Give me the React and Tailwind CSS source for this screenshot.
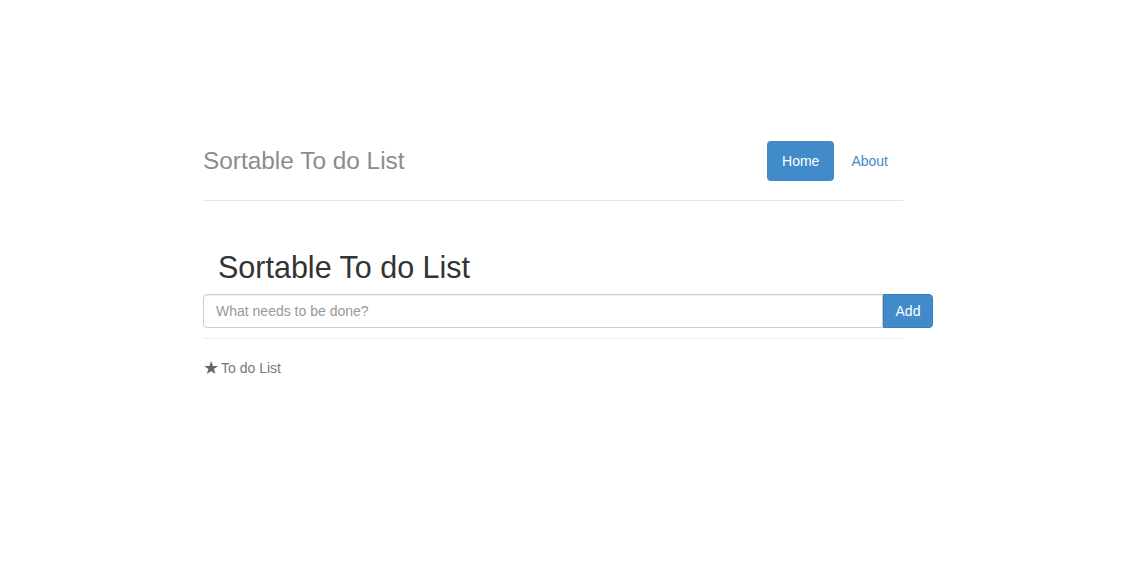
export default function App() {
  return (
    <div className="min-h-[570px] bg-white text-[14px] leading-[20px] text-[#333] font-['Liberation_Sans',Arial,sans-serif]">
      <div className="w-[700px] ml-[203px] pt-[141px]">
        {/* Header */}
        <div className="flex items-center justify-between pb-[19px] border-b border-[#e5e5e5]">
          <h3 className="text-[24.4px] leading-[40px] text-[#8c8c8c]">Sortable To do List</h3>
          <ul className="flex gap-[2px]">
            <li>
              <a className="block h-[40px] px-[15px] leading-[40px] rounded-[4px] bg-[#428bca] text-white">Home</a>
            </li>
            <li>
              <a className="block h-[40px] px-[15px] leading-[40px] rounded-[4px] text-[#428bca]">About</a>
            </li>
          </ul>
        </div>

        {/* Todo */}
        <div className="mt-[50px]">
          <h1 className="pl-[15px] text-[30.5px] leading-[33px] text-[#333]">Sortable To do List</h1>
          <div className="mt-[10px] flex">
            <input
              type="text"
              placeholder="What needs to be done?"
              className="shrink-0 w-[680px] h-[34px] px-[12px] border border-[#ccc] rounded-l-[4px] text-[14px] text-[#555] placeholder:text-[#999] outline-none shadow-[inset_0_1px_1px_rgba(0,0,0,0.075)]"
            />
            <button className="shrink-0 w-[50px] h-[34px] border border-[#357ebd] rounded-r-[4px] bg-[#428bca] text-white text-[14px]">
              Add
            </button>
          </div>
          <hr className="mt-[10px] border-0 border-t border-[#eee]" />
          <div className="mt-[19px] flex items-center gap-[2px] text-[#777]">
            <span className="text-[18px] leading-[20px] text-[#666]">★</span>
            <span>To do List</span>
          </div>
        </div>
      </div>
    </div>
  );
}
